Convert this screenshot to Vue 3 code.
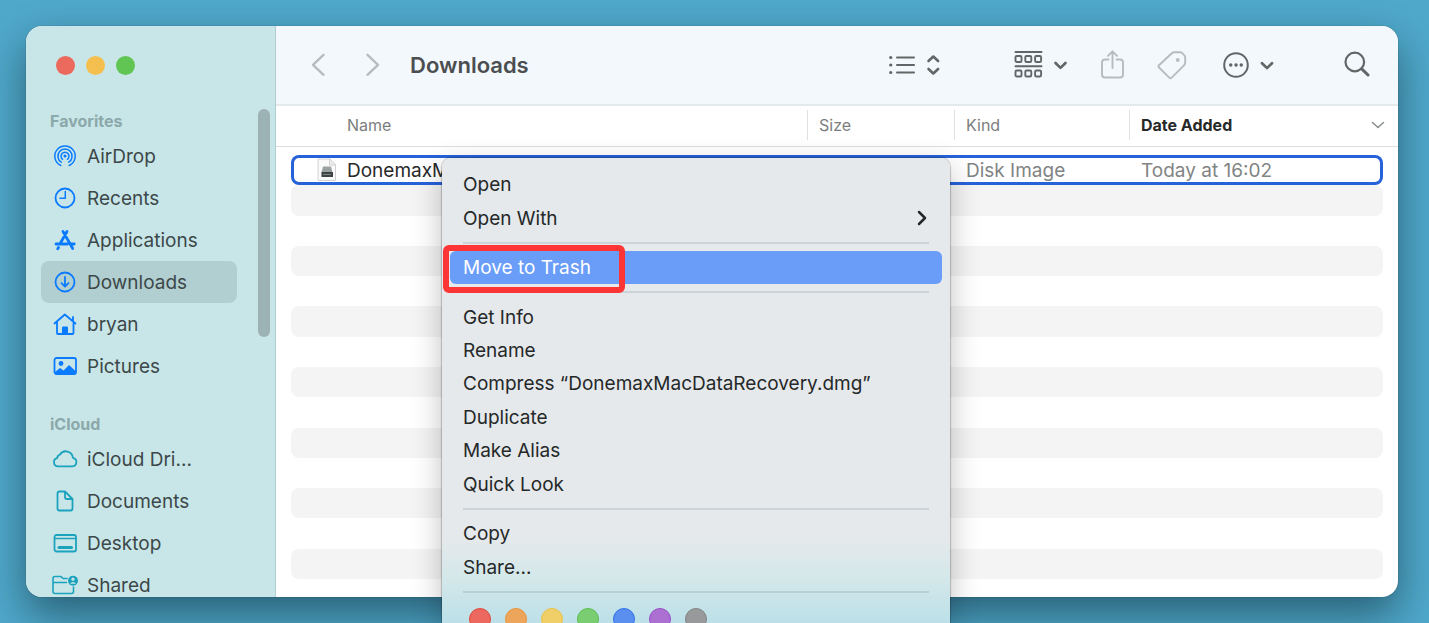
<template>
  <main class="desktop">
    <div class="window">
      <aside class="sidebar">
        <div class="traffic">
          <button v-for="c in ['red', 'yellow', 'green']" :key="c" :class="['light', c]" :aria-label="c"></button>
        </div>
        <nav v-for="section in sections" :key="section.title" class="section">
          <h2>{{ section.title }}</h2>
          <a
            v-for="item in section.items"
            :key="item.label"
            href="#"
            :class="['place', section.tone, { active: item.active }]"
          >
            <svg class="place-icon" viewBox="0 0 26 26" aria-hidden="true" v-html="item.icon"></svg>
            <span>{{ item.label }}</span>
          </a>
        </nav>
        <div class="scroll-thumb"></div>
      </aside>

      <section class="content">
        <header class="toolbar">
          <button class="tool faded" aria-label="Back">
            <svg width="14" height="24" viewBox="0 0 14 24"><path d="M12.500 1.800 2 11.800l10.500 10" stroke-width="2.300" /></svg>
          </button>
          <button class="tool faded forward" aria-label="Forward">
            <svg width="14" height="24" viewBox="0 0 14 24"><path d="m1.500 1.800 10.500 10-10.500 10" stroke-width="2.300" /></svg>
          </button>
          <h1>Downloads</h1>
          <div class="tools">
            <button class="tool" aria-label="View as list">
              <svg width="51" height="30" viewBox="0 0 51 30">
                <path d="M8 7.500h17M8 15h17M8 22.500h17" />
                <path d="M1.700 7.500h.1M1.700 15h.1M1.700 22.500h.1" stroke-width="3.200" />
                <path d="m39.500 11 4.800-4.500 4.800 4.500M39.500 19l4.800 4.500 4.800-4.500" stroke-width="2.600" />
              </svg>
            </button>
            <button class="tool group" aria-label="Group items">
              <svg width="54" height="30" viewBox="0 0 54 30">
                <path d="M1.500 2h26M1.500 16.300h26" />
                <g stroke-width="1.900">
                  <rect x="1.500" y="6" width="6" height="6" rx="1.300" />
                  <rect x="11.300" y="6" width="6" height="6" rx="1.300" />
                  <rect x="21.100" y="6" width="6" height="6" rx="1.300" />
                  <rect x="1.500" y="20.500" width="6" height="6" rx="1.300" />
                  <rect x="11.300" y="20.500" width="6" height="6" rx="1.300" />
                  <rect x="21.100" y="20.500" width="6" height="6" rx="1.300" />
                </g>
                <path d="m41.500 13 5 4.900 5-4.900" stroke-width="2.700" />
              </svg>
            </button>
            <button class="tool faded" aria-label="Share">
              <svg width="25" height="30" viewBox="0 0 25 30">
                <path d="M8.500 9.500H5q-3 0-3 3v12q0 3 3 3h15q3 0 3-3v-12q0-3-3-3h-3.500M12.500 18V1.500M8 5.800l4.500-4.500L17 5.800" stroke-width="1.900" />
              </svg>
            </button>
            <button class="tool faded" aria-label="Tags">
              <svg width="30" height="30" viewBox="0 0 30 30">
                <path d="M2 15.200 14.500 3.500q1.200-1.200 3-1.200h5.500q1.300 0 2.200.9l2 2q1 1 1 2.300v5q0 1.700-1.200 2.900L14.700 27.600q-1.200 1.200-2.400 0L2 17.500q-1.200-1.200 0-2.300z" stroke-width="1.900" />
                <circle cx="20.800" cy="10" r="1.900" fill="currentColor" stroke="none" />
              </svg>
            </button>
            <button class="tool more" aria-label="More">
              <svg width="51" height="30" viewBox="0 0 51 30">
                <circle cx="13" cy="15" r="11.800" />
                <path d="M7.700 15h.1M13 15h.1M18.200 15h.1" stroke-width="3.400" />
                <path d="m39 13.200 5 4.900 5-4.900" stroke-width="2.700" />
              </svg>
            </button>
            <button class="tool search" aria-label="Search">
              <svg width="26" height="30" viewBox="0 0 26 30">
                <circle cx="10.800" cy="12" r="9.300" stroke-width="2.200" />
                <path d="m17.700 18.900 6.300 6.100" stroke-width="3" />
              </svg>
            </button>
          </div>
        </header>

        <table class="files">
          <thead>
            <tr>
              <th class="name">Name</th>
              <th>Size</th>
              <th>Kind</th>
              <th class="sorted">
                Date Added
                <svg width="14" height="10" viewBox="0 0 14 10"><path d="m1.500 2.500 5.500 5 5.500-5" /></svg>
              </th>
            </tr>
          </thead>
          <tbody>
            <tr class="selected">
              <td class="name">
                <svg width="20" height="24" viewBox="0 0 20 24" aria-hidden="true">
                  <path d="M1.500 1h11l6 6v15.500h-17z" fill="#fafafa" stroke="#d2d2d2" />
                  <path d="M12.500 1v6h6z" fill="#eee" stroke="#d2d2d2" />
                  <path d="M6 8.500h8l1.500 6h-11z" fill="#9aa1a1" stroke="none" />
                  <path d="M4.500 14h11.500v5h-11.500z" fill="#3d4242" stroke="none" />
                  <path d="M6.500 16.500h7" stroke="#82888a" />
                </svg>
                DonemaxMacDataRecovery.dmg
              </td>
              <td></td>
              <td>Disk Image</td>
              <td>Today at 16:02</td>
            </tr>
            <tr v-for="n in 13" :key="n"><td></td><td></td><td></td><td></td></tr>
          </tbody>
        </table>
      </section>
    </div>

    <div class="menu" role="menu">
      <template v-for="(group, i) in menu" :key="i">
        <button
          v-for="label in group"
          :key="label"
          role="menuitem"
          :class="['menu-item', { highlighted: label === 'Move to Trash' }]"
        >
          {{ label }}
          <svg v-if="label === 'Open With'" width="10" height="16" viewBox="0 0 10 16">
            <path d="m2 2 6 6-6 6" />
          </svg>
          <span v-if="label === 'Move to Trash'" class="marker"></span>
        </button>
        <hr>
      </template>
      <div class="tags">
        <button v-for="tag in tags" :key="tag" :class="['tag', tag]" :aria-label="tag"></button>
      </div>
    </div>
  </main>
</template>

<script setup>
const sections = [
  {
    title: 'Favorites',
    tone: 'blue',
    items: [
      {
        label: 'AirDrop',
        icon: '<circle cx="13" cy="13" r="1.600" fill="currentColor" stroke="none"/><path d="M10.500 16.300a4 4 0 1 1 5 0M9.300 19.200a7.100 7.100 0 1 1 7.400 0M8.800 22.500a10.200 10.200 0 1 1 8.400 0" stroke-width="1.500"/>'
      },
      { label: 'Recents', icon: '<circle cx="13" cy="13" r="9.500"/><path d="M13.300 6.500v6.800H8" stroke-width="1.500"/>' },
      {
        label: 'Applications',
        icon: '<path d="M11 4.500 18.700 18l2 3.500M15 4.500 8.500 16M6.500 20.500l-.8 1.400M4 17h11.500M19 17h3.200" stroke-width="2.800"/>'
      },
      {
        label: 'Downloads',
        active: true,
        icon: '<circle cx="13" cy="13" r="9.500"/><path d="M13 8v9.500m-3.500-3.300 3.500 3.500 3.500-3.500"/>'
      },
      {
        label: 'bryan',
        icon: '<path d="M2.500 12.500 12.800 3.500l10.700 9M5 11v11q0 1 1 1h14.500q1 0 1-1V11M21 10V6"/><path d="M10 22.500v-6q0-1 1-1h4q1 0 1 1v6z" fill="currentColor" stroke="none"/>'
      },
      {
        label: 'Pictures',
        icon: '<rect x="2.500" y="5" width="21.500" height="16" rx="2"/><circle cx="9" cy="10.500" r="2.400" fill="currentColor" stroke="none"/><path d="M3 19l5-4 3.500 2.500L17 12l6.500 6v3H3z" fill="currentColor" stroke="none"/>'
      }
    ]
  },
  {
    title: 'iCloud',
    tone: 'teal',
    items: [
      {
        label: 'iCloud Dri...',
        icon: '<path d="M6 20.300h14.500a4.300 4.300 0 0 0 .4-8.500A7 7 0 0 0 8 8.600a4 4 0 0 0-2.800 3.600A4.100 4.100 0 0 0 6 20.300z"/>'
      },
      {
        label: 'Documents',
        icon: '<path d="M7.500 3.500h5.500l7.500 7.500v9.500q0 2-2 2h-11q-2 0-2-2v-15q0-2 2-2zM13 3.500V9q0 2 2 2h5.500"/>'
      },
      {
        label: 'Desktop',
        icon: '<rect x="2.500" y="5" width="21.500" height="16.500" rx="2"/><path d="M3 8.500h20.500" stroke-width="1.300"/><path d="M7 17.500h12.500" stroke-width="3"/>'
      },
      {
        label: 'Shared',
        icon: '<path d="M15 6.500h-4L9 4.500H3q-2 0-2 2v13q0 2 2 2h16.500q2 0 2-2V15M1.500 10.500H14.500" stroke-width="1.600"/><circle cx="21" cy="8.800" r="5" fill="currentColor" stroke="none"/><circle cx="21" cy="7.200" r="1.600" fill="#c8e6e8" stroke="none"/><path d="M18 11.800q3-3.400 6 0z" fill="#c8e6e8" stroke="none"/>'
      }
    ]
  }
];

const menu = [
  ['Open', 'Open With'],
  ['Move to Trash'],
  ['Get Info', 'Rename', 'Compress “DonemaxMacDataRecovery.dmg”', 'Duplicate', 'Make Alias', 'Quick Look'],
  ['Copy', 'Share...']
];

const tags = ['red', 'orange', 'yellow', 'green', 'blue', 'purple', 'gray'];
</script>

<style>
body {
  margin: 0;
  overflow: hidden;
}
</style>

<style scoped>
.desktop {
  position: relative;
  box-sizing: border-box;
  display: flex;
  height: 100vh;
  padding: 26px 31px 26px 26px;
  overflow: hidden;
  background: #4fa8ca;
  font-family: Inter, "Liberation Sans", sans-serif;
  font-size: 19px;
}

button {
  padding: 0;
  border: none;
  background: none;
  font: inherit;
  color: inherit;
}

svg {
  display: block;
  flex-shrink: 0;
  fill: none;
  stroke: currentColor;
  stroke-width: 2;
  stroke-linecap: round;
  stroke-linejoin: round;
}

.window {
  flex: 1;
  display: flex;
  min-width: 0;
  border-radius: 16px;
  overflow: hidden;
  background: #fff;
  box-shadow: 0 0 1px rgba(0, 0, 0, 0.6), 0 18px 40px rgba(0, 20, 30, 0.48);
}

.sidebar {
  position: relative;
  box-sizing: border-box;
  width: 250px;
  flex-shrink: 0;
  padding: 0 15px;
  border-right: 1px solid #b0cfd2;
  overflow: hidden;
  background: #c8e6e8;
}

.traffic {
  display: flex;
  gap: 11px;
  padding: 30px 0 34px 15px;
}

.light {
  width: 19px;
  height: 19px;
  border-radius: 50%;
}

.light.red {
  background: #ec695e;
}

.light.yellow {
  background: #f5bf4f;
}

.light.green {
  background: #61c554;
}

.section {
  margin-bottom: 25px;
}

h2 {
  margin: 0 0 2px 9px;
  font-size: 16px;
  font-weight: 700;
  line-height: 24px;
  color: #8ba8aa;
}

.place {
  display: flex;
  align-items: center;
  gap: 9px;
  width: 185px;
  height: 42px;
  padding-left: 11px;
  border-radius: 8px;
  color: #3c4849;
  text-decoration: none;
}

.place.active {
  background: #b1ced0;
}

.place-icon {
  width: 26px;
  height: 26px;
  stroke-width: 1.800;
}

.blue .place-icon {
  color: #0a7aff;
}

.teal .place-icon {
  color: #1ba2bd;
}

.scroll-thumb {
  position: absolute;
  top: 83px;
  right: 5px;
  width: 12px;
  height: 228px;
  border-radius: 6px;
  background: #9db2b4;
}

.content {
  flex: 1;
  display: flex;
  flex-direction: column;
  min-width: 0;
}

.toolbar {
  display: flex;
  align-items: center;
  height: 78px;
  padding: 0 28px 0 35px;
  border-bottom: 2px solid #e4e9eb;
  background: #f3f8fc;
  color: #636667;
}

.tool.faded {
  color: #b7bbbd;
}

.forward {
  margin-left: 41px;
}

h1 {
  margin: 0 0 0 30px;
  font-size: 22px;
  font-weight: 600;
  color: #4b4e50;
}

.tools {
  display: flex;
  align-items: center;
  gap: 32px;
  margin-left: auto;
}

.group {
  margin-left: 42px;
}

.more {
  margin-left: 4px;
}

.search {
  margin-left: 38px;
}

.files {
  flex: 1;
  display: flex;
  flex-direction: column;
}

.files thead {
  display: block;
  padding: 4px 0 6px;
  border-bottom: 1px solid #dedede;
}

.files tr {
  display: grid;
  grid-template-columns: 1fr 147px 175px 254px;
  align-items: center;
}

.files thead tr {
  grid-template-columns: 1fr 147px 175px 269px;
}

.files th {
  padding: 0 0 0 11px;
  border-left: 1px solid #e0e0e0;
  font-size: 16px;
  font-weight: 400;
  line-height: 30px;
  text-align: left;
  color: #7b7e7e;
}

.files th.name {
  padding-left: 71px;
  border-left: none;
}

.files th.sorted {
  display: flex;
  align-items: center;
  justify-content: space-between;
  padding-right: 13px;
  font-weight: 700;
  color: #272929;
}

.sorted svg {
  color: #8a8d8d;
  stroke-width: 1.500;
}

.files tbody {
  flex: 1;
  display: flex;
  flex-direction: column;
  padding: 8px 15px 18px;
}

.files tbody tr {
  flex: 1;
  border-radius: 8px;
}

.files tbody tr:nth-child(even) {
  background: #f4f4f4;
}

.files tbody tr.selected {
  box-shadow: inset 0 0 0 3px #2762d9;
}

.files td {
  padding: 0 0 0 12px;
  color: #818484;
  white-space: nowrap;
}

.files td.name {
  display: flex;
  align-items: center;
  gap: 10px;
  padding-left: 26px;
  color: #272929;
}

.files td.name svg {
  stroke-width: 1;
}

/* the menu runs past the bottom edge of the screen */
.menu {
  position: absolute;
  top: 158px;
  bottom: 0;
  left: 442px;
  box-sizing: border-box;
  display: flex;
  flex-direction: column;
  width: 508px;
  padding-top: 10px;
  border-radius: 9px 9px 0 0;
  background: linear-gradient(to top, #bce0e8, #d5e8ea 48px, #e5e9eb 84px);
  box-shadow: 0 0 1px 1px rgba(0, 0, 0, 0.2), 0 10px 30px rgba(0, 0, 0, 0.25);
  color: #252829;
}

.menu-item {
  position: relative;
  flex: 1;
  display: flex;
  align-items: center;
  justify-content: space-between;
  margin: 0 8px;
  padding: 0 15px 0 13px;
  border-radius: 6px;
}

.menu-item svg {
  stroke-width: 2.500;
}

.menu-item.highlighted {
  background: #699df8;
  color: #fff;
}

.marker {
  position: absolute;
  top: -6px;
  bottom: -9px;
  left: -7px;
  box-sizing: border-box;
  width: 182px;
  border: 6px solid #fd3535;
  border-radius: 6px;
}

hr {
  flex-shrink: 0;
  width: 466px;
  height: 2px;
  margin: 7px 21px;
  border: none;
  background: rgba(0, 30, 40, 0.1);
}

.tags {
  display: flex;
  gap: 14px;
  height: 15px;
  padding: 8px 27px 0;
  overflow: hidden;
}

.tag {
  box-sizing: border-box;
  width: 22px;
  height: 22px;
  flex-shrink: 0;
  border: 1px solid;
  border-radius: 50%;
}

.tag.red {
  background: #ed685e;
  border-color: #e0483d;
}

.tag.orange {
  background: #eda55b;
  border-color: #e99335;
}

.tag.yellow {
  background: #f0cf68;
  border-color: #edc248;
}

.tag.green {
  background: #7bcd72;
  border-color: #5bbf50;
}

.tag.blue {
  background: #5a8ff0;
  border-color: #2f70e8;
}

.tag.purple {
  background: #ab70d2;
  border-color: #994fc7;
}

.tag.gray {
  background: #98999b;
  border-color: #828385;
}
</style>
